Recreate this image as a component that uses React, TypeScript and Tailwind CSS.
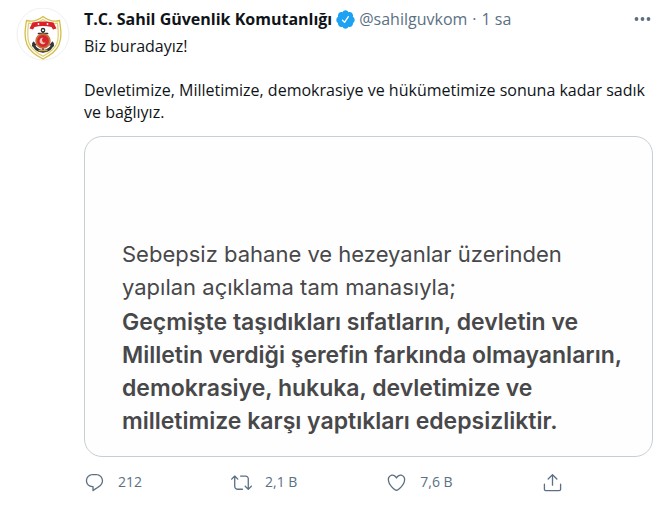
import type { ReactNode } from "react";

const PATHS = {
  verified:
    "M22.5 12.5c0-1.58-.875-2.95-2.148-3.6.154-.435.238-.905.238-1.4 0-2.21-1.71-3.998-3.818-3.998-.47 0-.92.084-1.336.25C14.818 2.415 13.51 1.5 12 1.5s-2.816.917-3.437 2.25c-.415-.165-.866-.25-1.336-.25-2.11 0-3.818 1.79-3.818 4 0 .494.083.964.237 1.4-1.272.65-2.147 2.018-2.147 3.6 0 1.495.782 2.798 1.942 3.486-.02.17-.032.34-.032.514 0 2.21 1.708 4 3.818 4 .47 0 .92-.086 1.335-.25.62 1.334 1.926 2.25 3.437 2.25 1.512 0 2.818-.916 3.437-2.25.415.163.865.248 1.336.248 2.11 0 3.818-1.79 3.818-4 0-.174-.012-.344-.033-.513 1.158-.687 1.943-1.99 1.943-3.484zm-6.616-3.334l-4.334 6.5c-.145.217-.382.334-.625.334-.143 0-.288-.04-.416-.126l-.115-.094-2.415-2.415c-.293-.293-.293-.768 0-1.06s.768-.294 1.06 0l1.77 1.767 3.825-5.74c.23-.345.696-.436 1.04-.207.346.23.44.696.21 1.04z",
  reply:
    "M14.046 2.242l-4.148-.01h-.002c-4.374 0-7.8 3.427-7.8 7.802 0 4.098 3.186 7.206 7.465 7.37v3.828c0 .108.044.286.12.403.142.225.384.347.632.347.138 0 .277-.038.402-.118.264-.168 6.473-4.14 8.088-5.506 1.902-1.61 3.04-3.97 3.043-6.312v-.017c-.006-4.367-3.43-7.787-7.8-7.788zm3.787 12.972c-1.134.96-4.862 3.405-6.772 4.643V16.67c0-.414-.335-.75-.75-.75h-.396c-3.66 0-6.318-2.476-6.318-5.886 0-3.534 2.768-6.302 6.3-6.302l4.147.01h.002c3.532 0 6.3 2.766 6.302 6.296-.003 1.91-.942 3.844-2.514 5.176z",
  retweet:
    "M23.77 15.67c-.292-.293-.767-.293-1.06 0l-2.22 2.22V7.65c0-2.068-1.683-3.75-3.75-3.75h-5.85c-.414 0-.75.336-.75.75s.336.75.75.75h5.85c1.24 0 2.25 1.01 2.25 2.25v10.24l-2.22-2.22c-.293-.293-.768-.293-1.06 0s-.294.768 0 1.06l3.5 3.5c.145.147.337.22.53.22s.383-.072.53-.22l3.5-3.5c.294-.292.294-.767 0-1.06zm-10.66 3.28H7.26c-1.24 0-2.25-1.01-2.25-2.25V6.46l2.22 2.22c.148.147.34.22.532.22s.384-.073.53-.22c.293-.293.293-.768 0-1.06l-3.5-3.5c-.293-.294-.768-.294-1.06 0l-3.5 3.5c-.294.292-.294.767 0 1.06s.767.293 1.06 0l2.22-2.22V16.7c0 2.068 1.683 3.75 3.75 3.75h5.85c.414 0 .75-.336.75-.75s-.337-.75-.75-.75z",
  like: "M12 21.638h-.014C9.403 21.59 1.95 14.856 1.95 8.478c0-3.064 2.525-5.754 5.403-5.754 2.29 0 3.83 1.58 4.646 2.73.814-1.148 2.354-2.73 4.645-2.73 2.88 0 5.404 2.69 5.404 5.755 0 6.376-7.454 13.11-10.037 13.157H12zM7.354 4.225c-2.08 0-3.903 1.988-3.903 4.255 0 5.74 7.034 11.596 8.55 11.658 1.518-.062 8.55-5.917 8.55-11.658 0-2.267-1.823-4.255-3.903-4.255-2.528 0-3.94 2.936-3.952 2.965-.23.562-1.156.562-1.387 0-.014-.03-1.425-2.965-3.954-2.965z",
  share:
    "M17.53 7.47l-5-5c-.293-.293-.768-.293-1.06 0l-5 5c-.294.293-.294.768 0 1.06s.767.294 1.06 0l3.72-3.72V15c0 .414.336.75.75.75s.75-.336.75-.75V4.81l3.72 3.72c.146.147.338.22.53.22s.384-.072.53-.22c.293-.293.293-.767 0-1.06zM19.708 21.944H4.292C3.028 21.944 2 20.916 2 19.652V14c0-.414.336-.75.75-.75s.75.336.75.75v5.652c0 .437.355.792.792.792h15.416c.437 0 .792-.355.792-.792V14c0-.414.336-.75.75-.75s.75.336.75.75v5.652c0 1.264-1.028 2.292-2.292 2.292z",
};

function Icon({ d, className }: { d: string; className: string }) {
  return (
    <svg viewBox="0 0 24 24" fill="currentColor" aria-hidden="true" className={className}>
      <path d={d} />
    </svg>
  );
}

function Action({ label, d, children }: { label: string; d: string; children?: ReactNode }) {
  return (
    <button type="button" aria-label={label} className="flex items-center gap-[13px] text-sm leading-[22px]">
      <Icon d={d} className="size-[21px]" />
      {children && <span>{children}</span>}
    </button>
  );
}

function Crest() {
  return (
    <svg viewBox="0 0 54 54" className="size-[54px] shrink-0" role="img" aria-label="Sahil Güvenlik">
      <circle cx="27" cy="26" r="26" fill="#fff" stroke="#f0f0f0" />
      <path
        d="M27 8.500C22 12.500 16 14 10.500 12.500C9 22 8 29 11 36.500C13.500 43 20 47.500 27 51C34 47.500 40.500 43 43 36.500C46 29 45 22 43.500 12.500C38 14 32 12.500 27 8.500Z"
        fill="#fffdf2"
        stroke="#d2bd4e"
        strokeWidth="1.300"
      />
      <path
        d="M27 11.500C22 15 17 16.200 12.600 15.200C11.500 23 10.700 29.500 13.200 35.500C15.500 41.200 21 45 27 48.200C33 45 38.500 41.200 40.800 35.500C43.300 29.500 42.500 23 41.400 15.200C37 16.200 32 15 27 11.500Z"
        fill="#fff"
        stroke="#dfce70"
        strokeWidth="1.200"
      />
      <path d="M16.500 14.500C23 13 31 13 37.500 14.500L40.500 20.500L37 21.500L35.500 19C30 17.600 24 17.600 18.500 19L17 21.500L13.500 20.500Z" fill="#d9202c" />
      <g fill="#fff">
        <circle cx="22.500" cy="16" r=".9" />
        <circle cx="31.500" cy="16" r=".9" />
      </g>
      <g fill="none" stroke="#343434" strokeLinecap="round">
        <circle cx="27" cy="22.200" r="1.700" strokeWidth="1.300" />
        <path d="M27 24V43M22.500 25.500H31.500" strokeWidth="1.700" />
        <path d="M17.500 35.500C18 40.500 21.500 42.500 27 43.500C32.500 42.500 36 40.500 36.500 35.500" strokeWidth="2.600" />
        <path d="M16.500 38L17.500 34.500L20 37M37.500 38L36.500 34.500L34 37" strokeWidth="1.200" />
      </g>
      <circle cx="27" cy="33" r="6.800" fill="#d5272b" stroke="#c4703f" strokeWidth="1.800" />
      <path d="M27.500 29.800A3.200 3.200 0 1 0 29.700 34.300A2.500 2.500 0 1 1 27.500 29.800Z" fill="#f5c3b5" />
      <path d="M22.500 42.500H31.500" stroke="#caa13f" strokeWidth="1.500" />
    </svg>
  );
}

export default function App() {
  return (
    <article className="flex gap-3.5 bg-white pt-2 pr-[11px] pl-4 font-['Open_Sans',sans-serif] text-base leading-[22px] text-[#0f1419]">
      <Crest />
      <div className="min-w-0 flex-1">
        <header className="flex items-center text-[#5b7083]">
          <a href="#profile" className="flex items-center">
            <span className="font-bold text-[#0f1419]">T.C. Sahil Güvenlik Komutanlığı</span>
            <Icon d={PATHS.verified} className="mx-[3px] size-[21px] text-[#1da1f2]" />
            <span>@sahilguvkom</span>
          </a>
          <span className="px-[5px]">·</span>
          <a href="#status">1 sa</a>
          <button type="button" aria-label="Daha fazla" className="ml-auto">
            <svg viewBox="0 0 21 21" fill="currentColor" className="size-[21px]" aria-hidden="true">
              <circle cx="4.500" cy="10" r="1.900" />
              <circle cx="10.500" cy="10" r="1.900" />
              <circle cx="16.500" cy="10" r="1.900" />
            </svg>
          </button>
        </header>
        <p className="mt-[5px]">Biz buradayız!</p>
        <p className="mt-[22px]">
          Devletimize, Milletimize, demokrasiye ve hükümetimize sonuna kadar sadık ve bağlıyız.
        </p>
        <figure className="mt-[13px] rounded-[18px] border border-[#c4cfd6] bg-[#fefefe] pt-[101px] pr-6 pb-[18px] pl-[37px] font-[Inter,sans-serif] text-[#48484a]">
          <p className="text-[22px] leading-[33px]">
            Sebepsiz bahane ve hezeyanlar üzerinden
            <br />
            yapılan açıklama tam manasıyla;
          </p>
          <p className="mt-0.5 text-[23px] leading-[33px] font-semibold">
            Geçmişte taşıdıkları sıfatların, devletin ve
            <br />
            Milletin verdiği şerefin farkında olmayanların,
            <br />
            demokrasiye, hukuka, devletimize ve
            <br />
            milletimize karşı yaptıkları edepsizliktir.
          </p>
        </figure>
        <footer className="mt-3.5 flex gap-[89px] text-[#5b7083]">
          <Action label="Yanıtla" d={PATHS.reply}>212</Action>
          <Action label="Retweetle" d={PATHS.retweet}>2,1 B</Action>
          <Action label="Beğen" d={PATHS.like}>7,6 B</Action>
          <Action label="Paylaş" d={PATHS.share} />
        </footer>
      </div>
    </article>
  );
}
